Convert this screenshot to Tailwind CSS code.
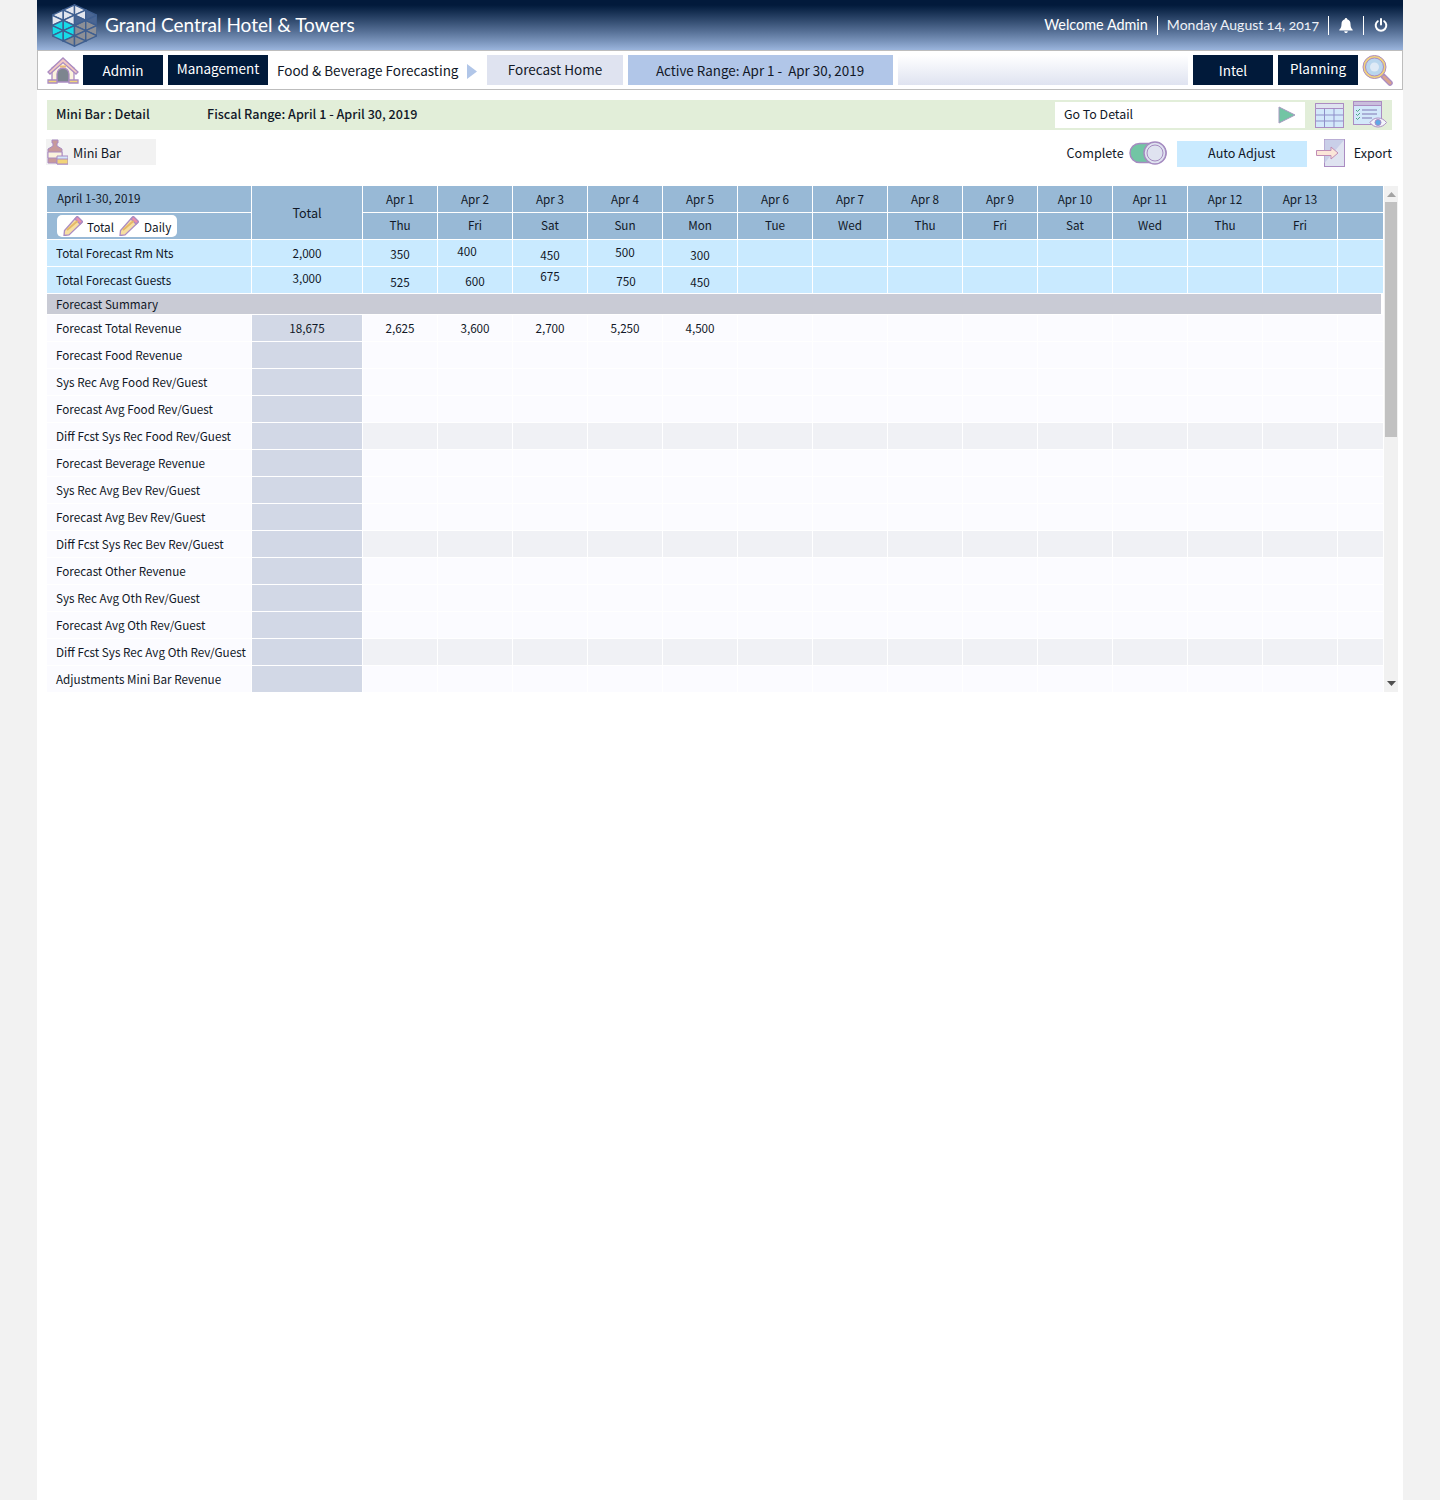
<!DOCTYPE html>
<html lang="en">
<head>
    <meta charset="UTF-8">
    <meta name="viewport" content="width=device-width, initial-scale=1.0">
    <title>Food &amp; Beverage Forecasting</title>
    <script src="https://cdn.jsdelivr.net/npm/@tailwindcss/browser@4"></script>
</head>
<body class="bg-[#f2f2f2] font-['Noto_Sans_CJK_JP',sans-serif] text-[#111827]">
<div class="w-[1366px] min-h-[1500px] ml-[37px] bg-white">

    <!-- Header -->
    <header class="h-[50px] flex items-center justify-between pl-[15px] pr-[15px] bg-gradient-to-b from-[#021a3b] from-10% to-[#9ab4dc] text-white font-['Lato',sans-serif]">
        <div class="flex items-center gap-[8px]">
            <svg width="45" height="43" viewBox="0 0 96 88" stroke="#3f5f90" stroke-width="3">
                <g fill="#e3e6ee">
                    <polygon points="24,11 24,33 0,22"/><polygon points="0,22 0,44 24,33"/>
                    <polygon points="48,0 48,22 24,11"/><polygon points="24,11 24,33 48,22"/><polygon points="48,22 48,44 24,33"/>
                    <polygon points="48,0 48,22 72,11"/><polygon points="72,11 72,33 48,22"/>
                </g>
                <g fill="#16dbe8">
                    <polygon points="24,33 24,55 0,44"/><polygon points="0,44 0,66 24,55"/><polygon points="24,55 24,77 0,66"/>
                    <polygon points="24,33 24,55 48,44"/><polygon points="48,44 48,66 24,55"/><polygon points="24,55 24,77 48,66"/>
                </g>
                <g fill="#8c8f96">
                    <polygon points="48,66 48,88 24,77"/>
                    <polygon points="72,33 72,55 48,44"/><polygon points="48,44 48,66 72,55"/><polygon points="72,55 72,77 48,66"/><polygon points="48,66 48,88 72,77"/>
                    <polygon points="72,33 72,55 96,44"/><polygon points="96,44 96,66 72,55"/><polygon points="72,55 72,77 96,66"/>
                </g>
                <g fill="#4a6693">
                    <polygon points="48,22 48,44 72,33"/><polygon points="72,11 72,33 96,22"/><polygon points="96,22 96,44 72,33"/>
                </g>
            </svg>
            <span class="text-[19px] leading-none pb-[2px]">Grand Central Hotel &amp; Towers</span>
        </div>
        <div class="flex items-center text-[14px] leading-none oldstyle-nums">
            <span class="pr-[9px] h-[19px] flex items-center border-r border-white text-[14.4px]">Welcome Admin</span>
            <span class="pl-[9px] pr-[9px] h-[19px] flex items-center border-r border-white text-[#eef1f7]">Monday August 14, 2017</span>
            <span class="px-[10px] h-[19px] flex items-center border-r border-white">
                <svg width="14" height="15" viewBox="0 0 14 15" fill="white"><path d="M7 0a1.2 1.2 0 0 1 1.2 1.3C10.400 1.900 11.500 3.700 11.500 6c0 3 .8 4.500 2.200 5.800V12.500H.3V11.800C1.700 10.500 2.500 9 2.500 6c0-2.300 1.100-4.100 3.300-4.700A1.200 1.200 0 0 1 7 0zM5.200 13.300h3.600a1.800 1.800 0 0 1-3.600 0z"/></svg>
            </span>
            <span class="pl-[10px] flex items-center">
                <svg width="14" height="14" viewBox="0 0 14 14" fill="none" stroke="white" stroke-width="2" stroke-linecap="round"><path d="M7 1v5.500M3.800 3.200a5.300 5.300 0 1 0 6.400 0"/></svg>
            </span>
        </div>
    </header>

    <!-- Nav -->
    <nav class="h-[40px] flex items-center gap-[5px] pl-[9px] border border-[#bdbdbd] text-[13.5px] leading-none">
        <svg width="32" height="27" viewBox="0 0 32 27" fill="none" stroke="#ab8cc2" stroke-width="1.300" class="-mr-[1px]">
            <path d="M5 11 16 3l11 8v13H5z" fill="#fbf3dc"/>
            <path d="M1 15 16 1l15 14-2 2L16 5.500 3 17z" fill="#f3c9c3"/>
            <path d="M10 25V17a6 6 0 0 1 12 0v8z" fill="#7d858f"/>
            <path d="M13 9.500h6" stroke="#e9b87a" stroke-width="2"/>
            <path d="M1 23h9v3H1zM22 23h9v3h-9z" fill="#f2d479"/>
        </svg>
        <a class="w-[80px] h-[30px] flex items-center justify-center pt-[2px] bg-[#011a3a] text-white">Admin</a>
        <a class="w-[100px] h-[30px] flex items-center justify-center pb-[2px] bg-[#011a3a] text-white">Management</a>
        <span class="w-[209px] h-[30px] pl-[4px] flex items-center gap-[9px] pt-[2px]">
            Food &amp; Beverage Forecasting
            <svg width="10" height="15" viewBox="0 0 10 15" class="shrink-0"><path d="M0 0l10 7.500L0 15z" fill="#b1c6e8"/></svg>
        </span>
        <a class="w-[136px] h-[30px] flex items-center justify-center bg-[#dfe3f0]">Forecast Home</a>
        <div class="w-[265px] h-[30px] flex items-center justify-center pr-[1px] pt-[1px] text-[13.4px] bg-[#b1c6e8]">Active Range: Apr 1 -&nbsp; Apr 30, 2019</div>
        <div class="w-[290px] h-[30px] bg-gradient-to-b from-white to-[#dfe3f0]"></div>
        <a class="w-[80px] h-[30px] flex items-center justify-center pt-[2px] bg-[#011a3a] text-white">Intel</a>
        <a class="w-[80px] h-[30px] flex items-center justify-center pb-[2px] bg-[#011a3a] text-white">Planning</a>
        <svg width="32" height="31" viewBox="0 0 32 31" class="-ml-[1px]">
            <path d="M21 21l7 7" stroke="#ab8cc2" stroke-width="5.500" stroke-linecap="round"/>
            <path d="M22 22l6 6" stroke="#d9a38e" stroke-width="3" stroke-linecap="round"/>
            <circle cx="12.500" cy="12" r="11.500" fill="#f2d479" stroke="#ab8cc2" stroke-width="1"/>
            <circle cx="12.500" cy="12" r="9" fill="#b9d6ee" stroke="#ab8cc2" stroke-width="1"/>
            <circle cx="12.500" cy="12" r="4.500" fill="#dfeaf6"/>
        </svg>
    </nav>

    <div class="pl-[10px] pr-[11px]">
        <!-- Title bar -->
        <section class="mt-[10px] h-[30px] flex items-center bg-[#e2eed9] text-[12.6px] leading-none">
            <span class="w-[160px] pl-[9px] pb-[2px] font-medium">Mini Bar : Detail</span>
            <span class="pb-[2px] font-medium">Fiscal Range: April 1 - April 30, 2019</span>
            <div class="ml-auto w-[250px] h-[26px] flex items-center justify-between pl-[9px] pr-[9px] bg-white">
                <span class="pb-[1px] text-[12.4px]">Go To Detail</span>
                <svg width="18" height="18" viewBox="0 0 18 18"><path d="M1 1l16 8-16 8z" fill="#72c5a4" stroke="#a79ac0" stroke-width="1"/></svg>
            </div>
            <svg width="29" height="25" viewBox="0 0 29 25" fill="#d3e8fa" stroke="#ab8cc2" class="ml-[10px]">
                <rect x=".500" y=".500" width="28" height="24"/>
                <path d="M.500 .500h28v5H.500z" fill="#dfe3f0"/>
                <path d="M.500 12h28M.500 18h28M9.500 5.500v19M19 5.500v19" fill="none" stroke="#8f8fc9"/>
            </svg>
            <svg width="34" height="28" viewBox="0 0 34 28" fill="none" stroke="#ab8cc2" class="ml-[9px] mr-[5px]">
                <rect x=".500" y=".500" width="28" height="23" fill="#d3e8fa"/>
                <path d="M.500 .500h28v4H.500z" fill="#c9bedd"/>
                <path d="M9 9h15M9 13h15M9 17h10" stroke="#7f76b3"/>
                <path d="M3 9l1.500 1.500L7 8M3 13l1.500 1.500L7 12M3 17l1.500 1.500L7 16" stroke="#4fa886"/>
                <path d="M17 21.500c4-6 12-6 16.500 0-4.500 6-12.500 6-16.500 0z" fill="#f3f5fb"/>
                <circle cx="25" cy="21.500" r="3" fill="#5fa8e6"/>
            </svg>
        </section>

        <!-- Toolbar -->
        <section class="mt-[9px] h-[28px] flex items-center text-[12.6px] leading-none">
            <div class="-ml-[1px] -mt-[2px] w-[110px] h-[26px] flex items-center gap-[5px] bg-[#f2f2f2]">
                <svg width="22" height="26" viewBox="0 0 22 26" stroke="#ab8cc2" class="shrink-0">
                    <path d="M6 1h6v3h-1v3l5 3v14H2V10l5-3V4H6z" fill="#c79a9a"/>
                    <path d="M2 13h14v6H2z" fill="#fbf3dc"/>
                    <path d="M11 17h11v8H11z" fill="#d3e8fa"/>
                    <path d="M11 20h11v5H11z" fill="#f2d479"/>
                </svg>
                <span class="pt-[2px]">Mini Bar</span>
            </div>
            <span class="ml-auto mr-[5px]">Complete</span>
            <svg width="38" height="24" viewBox="0 0 38 24" class="mr-[10px]" stroke="#a58bc0" stroke-width="1.500">
                <rect x="1" y="2.500" width="36" height="19" rx="9.500" fill="#72c5a4"/>
                <circle cx="26" cy="12" r="11" fill="#dfe3f0"/>
                <circle cx="26" cy="12" r="8" fill="#dfe3f0" stroke-width="1"/>
            </svg>
            <button class="w-[130px] h-[26px] pb-[2px] bg-[#c9eaff] flex items-center justify-center mt-[2px]">Auto Adjust</button>
            <svg width="30" height="28" viewBox="0 0 30 28" class="ml-[9px] mr-[8px]" stroke="#ab8cc2">
                <rect x="8.500" y=".500" width="20" height="27" fill="#dfe3f0"/>
                <path d="M8.500 .500h20L8.500 24z" fill="#c9cfe8" stroke="none"/>
                <path d="M.500 11.500H15V8l7 6-7 6v-3.500H.500z" fill="#fbe6d8" stroke="#c08cb5"/>
            </svg>
            <span>Export</span>
        </section>

        <!-- Grid -->
        <section class="mt-[19px] flex w-[1351px] h-[506px] overflow-hidden">
            <div id="grid" class="grid grid-cols-[204px_110px_repeat(13,74px)_45px] grid-rows-[repeat(4,26px)_20px] auto-rows-[26px] gap-px content-start text-[11.7px] leading-none h-[506px] overflow-hidden">
                <div class="bg-[#98b9d6] flex items-center pl-[10px] pb-[2px]">April 1-30, 2019</div>
                <div class="row-span-2 bg-[#98b9d6] flex items-center justify-center pt-[2px] text-[12.6px]">Total</div>
                <div class="col-start-1 row-start-2 bg-[#98b9d6] flex items-center pl-[10px]">
                    <div class="w-[120px] h-[22px] bg-white rounded-[5px] flex items-center pl-[6px]">
                        <svg width="20" height="20" viewBox="0 0 20 20" stroke="#ab8cc2" stroke-width="1.300" class="shrink-0"><path d="M13.500 1 19 6.500 6 19l-5 .5.500-5z" fill="#f7dfa0"/><path d="M14.500 .5 19.500 5.500 17 8l-5-5z" fill="#f08ca8"/><path d="M4 14 14.500 5" fill="none" stroke="#e5b968" stroke-width="2"/></svg>
                        <span class="ml-[4px] mt-[2px]">Total</span>
                        <svg width="20" height="20" viewBox="0 0 20 20" stroke="#ab8cc2" stroke-width="1.300" class="shrink-0 ml-[5px]"><path d="M13.500 1 19 6.500 6 19l-5 .5.500-5z" fill="#f7dfa0"/><path d="M14.500 .5 19.500 5.500 17 8l-5-5z" fill="#f08ca8"/><path d="M4 14 14.500 5" fill="none" stroke="#e5b968" stroke-width="2"/></svg>
                        <span class="ml-[5px] mt-[2px]">Daily</span>
                    </div>
                </div>
            </div>
            <!-- Scrollbar -->
            <div class="w-[14px] ml-px flex flex-col items-center bg-[#f1f1f1]">
                <svg width="9" height="5" viewBox="0 0 9 5" class="mt-[6px]"><path d="M0 5l4.500-5L9 5z" fill="#a3a3a3"/></svg>
                <div class="w-[12px] h-[235px] mt-[5px] bg-[#c1c1c1]"></div>
                <svg width="9" height="5" viewBox="0 0 9 5" class="mt-auto mb-[6px]"><path d="M0 0l4.500 5L9 0z" fill="#505050"/></svg>
            </div>
        </section>
    </div>
</div>

<script>
    const grid = document.getElementById('grid');
    const dates = ['Apr 1','Apr 2','Apr 3','Apr 4','Apr 5','Apr 6','Apr 7','Apr 8','Apr 9','Apr 10','Apr 11','Apr 12','Apr 13',''];
    const days = ['Thu','Fri','Sat','Sun','Mon','Tue','Wed','Thu','Fri','Sat','Wed','Thu','Fri',''];

    function addCell(text, classes) {
        const cell = document.createElement('div');
        cell.className = 'flex items-center ' + classes;
        cell.textContent = text;
        grid.appendChild(cell);
    }

    dates.forEach((d, i) => {
        addCell(d, 'justify-center bg-[#98b9d6] row-start-1');
        grid.lastChild.style.gridColumnStart = i + 3;
    });
    days.forEach((d, i) => {
        addCell(d, 'justify-center pb-[2px] bg-[#98b9d6] row-start-2');
        grid.lastChild.style.gridColumnStart = i + 3;
    });

    // the two blue rows have values sitting a bit off centre
    const blueRows = [
        ['Total Forecast Rm Nts', ['2,000', ''], [['350','pt-[2px]'],['400','pb-[4px] pr-4'],['450','pt-[4px]'],['500','pb-[2px]'],['300','pt-[4px]']]],
        ['Total Forecast Guests', ['3,000', 'pb-[4px]'], [['525','pt-[4px]'],['600','pt-[2px]'],['675','pb-[8px]'],['750','pt-[2px] pl-[2px]'],['450','pt-[4px]']]]
    ];
    blueRows.forEach(([label, total, values]) => {
        addCell(label, 'bg-[#c9eaff] pl-[9px]');
        addCell(total[0], 'bg-[#c9eaff] justify-center ' + total[1]);
        for (let i = 0; i < 14; i++) {
            const v = values[i] || ['', ''];
            addCell(v[0], 'bg-[#c9eaff] justify-center ' + v[1]);
        }
    });

    addCell('Forecast Summary', 'col-span-full mr-[2px] bg-[#c9cbd5] pl-[9px]');

    const rows = [
        'Forecast Total Revenue','Forecast Food Revenue','Sys Rec Avg Food Rev/Guest','Forecast Avg Food Rev/Guest',
        'Diff Fcst Sys Rec Food Rev/Guest','Forecast Beverage Revenue','Sys Rec Avg Bev Rev/Guest','Forecast Avg Bev Rev/Guest',
        'Diff Fcst Sys Rec Bev Rev/Guest','Forecast Other Revenue','Sys Rec Avg Oth Rev/Guest','Forecast Avg Oth Rev/Guest',
        'Diff Fcst Sys Rec Avg Oth Rev/Guest','Adjustments Mini Bar Revenue'
    ];
    const revenue = ['2,625','3,600','2,700','5,250','4,500'];

    rows.forEach((label, r) => {
        const rowBg = label.startsWith('Diff') ? 'bg-[#f0f1f5]' : 'bg-[#fbfbff]';
        addCell(label, 'bg-[#fbfbff] pl-[9px] whitespace-nowrap');
        addCell(r === 0 ? '18,675' : '', 'bg-[#d2d8e6] justify-center');
        for (let i = 0; i < 14; i++) {
            addCell(r === 0 && revenue[i] ? revenue[i] : '', rowBg + ' justify-center');
        }
    });
</script>
</body>
</html>
